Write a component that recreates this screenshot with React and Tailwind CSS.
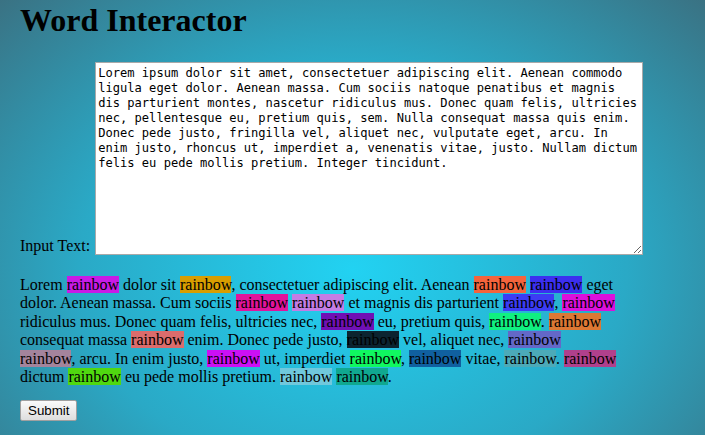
import React, { useState } from 'react'

const SOURCE =
  'Lorem ipsum dolor sit amet, consectetuer adipiscing elit. Aenean commodo ligula eget dolor. Aenean massa. Cum sociis natoque penatibus et magnis dis parturient montes, nascetur ridiculus mus. Donec quam felis, ultricies nec, pellentesque eu, pretium quis, sem. Nulla consequat massa quis enim. Donec pede justo, fringilla vel, aliquet nec, vulputate eget, arcu. In enim justo, rhoncus ut, imperdiet a, venenatis vitae, justo. Nullam dictum felis eu pede mollis pretium. Integer tincidunt.'

// output pieces: strings are plain text, numbers index into RAINBOW
const RAINBOW = [
  'bg-[#c81ae6]', 'bg-[#d89e00]', 'bg-[#f4643c]', 'bg-[#3c2ff0]',
  'bg-[#e0149c]', 'bg-[#c47ce4]', 'bg-[#3c3cf4]', 'bg-[#dc10dc]',
  'bg-[#7010b4]', 'bg-[#10f080]', 'bg-[#dc7834]', 'bg-[#dc6c6c]',
  'bg-[#0c2430]', 'bg-[#6468c8]', 'bg-[#a4849c]', 'bg-[#cc10f4]',
  'bg-[#10f860]', 'bg-[#1060a0]', 'bg-[#4caab8]', 'bg-[#b0408c]',
  'bg-[#50d810]', 'bg-[#70c8dc]', 'bg-[#10a890]',
]

const OUTPUT = [
  'Lorem ', 0, ' dolor sit ', 1, ', consectetuer adipiscing elit. Aenean ', 2, ' ', 3,
  ' eget dolor. Aenean massa. Cum sociis ', 4, ' ', 5, ' et magnis dis parturient ', 6, ', ', 7,
  ' ridiculus mus. Donec quam felis, ultricies nec, ', 8, ' eu, pretium quis, ', 9, '. ', 10,
  ' consequat massa ', 11, ' enim. Donec pede justo, ', 12, ' vel, aliquet nec, ', 13, ' ', 14,
  ', arcu. In enim justo, ', 15, ' ut, imperdiet ', 16, ', ', 17, ' vitae, ', 18, '. ', 19,
  ' dictum ', 20, ' eu pede mollis pretium. ', 21, ' ', 22, '.',
]

export default function App() {
  const [text, setText] = useState(SOURCE)

  return (
    <div className="min-h-screen px-5 pt-[2px] bg-[radial-gradient(ellipse_at_50%_62%,#22d2f2_0%,#2aa9c6_55%,#3a7283_100%)] font-['Liberation_Serif','Times_New_Roman',serif] text-black text-[16px]">
      <h1 className="m-0 text-[32px] leading-[37px] font-bold">Word Interactor</h1>

      <div className="mt-[23px] flex items-end gap-[5px]">
        <label htmlFor="input" className="leading-[18px]">Input Text:</label>
        <textarea
          id="input"
          value={text}
          onChange={e => setText(e.target.value)}
          className="w-[548px] h-[193px] bg-white border border-[#a9a9a9] px-[2px] py-[3px] font-['DejaVu_Sans_Mono',monospace] text-[12.1px] leading-[15px] text-black outline-none"
        />
      </div>

      <p className="mt-[21px] w-[600px] leading-[18.4px]">
        {OUTPUT.map((piece, i) =>
          typeof piece === 'number'
            ? <span key={i} className={RAINBOW[piece]}>rainbow</span>
            : <React.Fragment key={i}>{piece}</React.Fragment>
        )}
      </p>

      <button className="mt-[14px] h-[21px] px-[7px] border border-[#a0a0a0] rounded-[2px] bg-[linear-gradient(#fafafa,#dedede)] font-['Liberation_Sans',Arial,sans-serif] text-[13.33px] leading-[17px]">
        Submit
      </button>
    </div>
  )
}
